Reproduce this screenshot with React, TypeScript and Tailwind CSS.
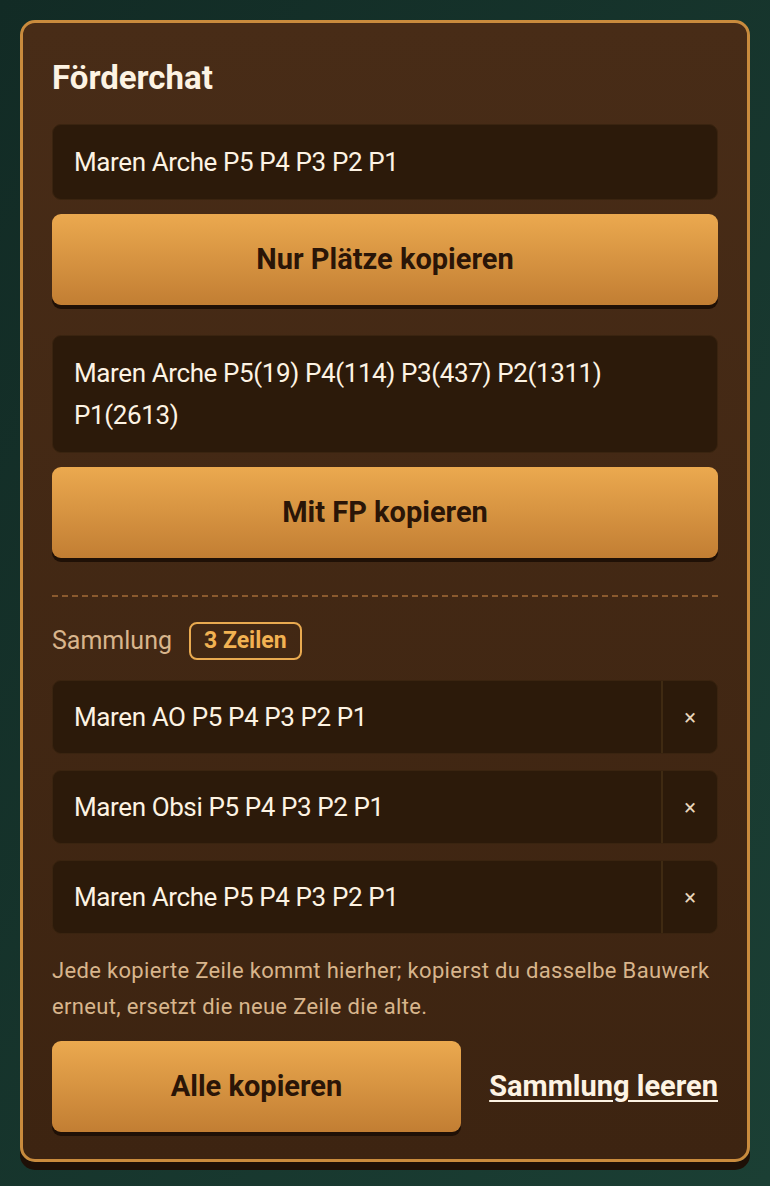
import React from "react";

const rows = [
  "Maren AO P5 P4 P3 P2 P1",
  "Maren Obsi P5 P4 P3 P2 P1",
  "Maren Arche P5 P4 P3 P2 P1",
];

function OrangeButton({ children, className = "" }: { children: React.ReactNode; className?: string }) {
  return (
    <button
      className={
        "flex h-[91px] items-center justify-center rounded-[9px] bg-gradient-to-b from-[#eba94f] to-[#c27e33] text-[29px] font-bold text-[#2a1507] shadow-[0_4px_0_#1f1006] " +
        className
      }
    >
      {children}
    </button>
  );
}

export default function App() {
  return (
    <div
      className="min-h-[1186px] w-full bg-gradient-to-br from-[#122b25] to-[#1b3f34] p-[20px]"
      style={{ fontFamily: "Roboto, 'Liberation Sans', sans-serif" }}
    >
      <div className="rounded-[15px] border-[3px] border-[#c98b3d] bg-gradient-to-b from-[#482c17] to-[#3d2411] px-[29px] pb-[27px] pt-[36px] shadow-[0_8px_0_#1e1007]">
        <h1 className="mb-[27px] text-[33px] font-bold leading-[38px] text-[#fdf3e3]">Förderchat</h1>

        <div className="rounded-[9px] border border-[#3a2410] bg-[#2c1a0a] px-[21px] py-[16px] text-[26px] leading-[42px] tracking-[-0.015em] text-[#fdf3e3]">
          Maren Arche P5 P4 P3 P2 P1
        </div>
        <OrangeButton className="mt-[14px] w-full">Nur Plätze kopieren</OrangeButton>

        <div className="mt-[30px] rounded-[9px] border border-[#3a2410] bg-[#2c1a0a] px-[21px] py-[16px] text-[26px] leading-[42px] tracking-[-0.015em] text-[#fdf3e3]">
          Maren Arche P5(19) P4(114) P3(437) P2(1311) P1(2613)
        </div>
        <OrangeButton className="mt-[14px] w-full">Mit FP kopieren</OrangeButton>

        <div className="mt-[37px] border-t-2 border-dashed border-[#8b5a2e]" />

        <div className="mt-[25px] flex items-center gap-[17px]">
          <span className="text-[25px] leading-[30px] text-[#d8b58c]">Sammlung</span>
          <span className="flex h-[38px] items-center rounded-[8px] border-2 border-[#e9aa50] px-[13px] text-[23px] font-bold text-[#f2b252]">
            3 Zeilen
          </span>
        </div>

        <div className="mt-[20px] flex flex-col gap-[16px]">
          {rows.map((r) => (
            <div key={r} className="flex h-[74px] overflow-hidden rounded-[9px] border border-[#3a2410] bg-[#2c1a0a]">
              <div className="flex flex-1 items-center px-[21px] text-[26px] tracking-[-0.015em] text-[#fdf3e3]">{r}</div>
              <div className="flex w-[56px] items-center justify-center border-l-2 border-[#3f2a12] text-[22px] text-[#e9d6bc]">
                ×
              </div>
            </div>
          ))}
        </div>

        <p className="mt-[19px] text-[22px] leading-[36px] tracking-[0.015em] text-[#d8b58c]">
          Jede kopierte Zeile kommt hierher; kopierst du dasselbe Bauwerk erneut, ersetzt die neue Zeile die alte.
        </p>

        <div className="mt-[16px] flex items-center justify-between">
          <OrangeButton className="w-[409px]">Alle kopieren</OrangeButton>
          <span className="text-[29px] font-bold text-[#fdf3e3] underline decoration-2 underline-offset-4">
            Sammlung leeren
          </span>
        </div>
      </div>
    </div>
  );
}
